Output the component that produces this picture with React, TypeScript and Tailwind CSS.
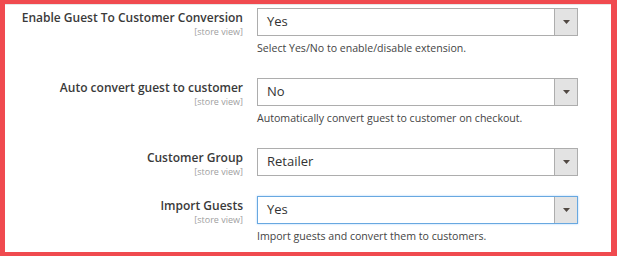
const FONT = "font-['Open_Sans','Noto_Sans',sans-serif]";

interface FieldProps {
  label: string;
  value: string;
  help?: string;
  focused?: boolean;
  className?: string;
}

function Field({ label, value, help, focused, className }: FieldProps) {
  return (
    <div className={`flex gap-[14px] ${className ?? ""}`}>
      <div className="w-[238px] flex-shrink-0 text-right pt-[2px]">
        <div className="text-[12px] leading-[15px] font-semibold text-[#3a3a3a] whitespace-nowrap">{label}</div>
        <div className="mt-[1px] text-[9px] leading-[11px] text-[#a0a0a0]">[store view]</div>
      </div>
      <div className="w-[321px] flex-shrink-0">
        <div
          className={`flex h-[28px] bg-white border ${
            focused ? "border-[#68a8e0] shadow-[0_0_2px_rgba(0,126,255,0.35)]" : "border-[#adadad]"
          }`}
        >
          <div className="flex-1 flex items-center pl-[9px] text-[13px] text-[#333]">{value}</div>
          <div className="w-[23px] flex items-center justify-center bg-[#e3e3e3] border-l border-[#adadad]">
            <svg width="7" height="4" viewBox="0 0 7 4">
              <path d="M0 0h7L3.5 4z" fill="#514943" />
            </svg>
          </div>
        </div>
        {help && <div className="mt-[5px] text-[10.6px] leading-[14px] text-[#444]">{help}</div>}
      </div>
    </div>
  );
}

export default function App() {
  return (
    <div
      className={`w-[617px] h-[256px] bg-white border-solid border-[#f04a4f] border-l-[5px] border-t-[4px] border-r-[6px] border-b-[4px] overflow-hidden ${FONT}`}
    >
      <div className="border-t border-[#e6e6e6]">
        <Field
          className="mt-[3px]"
          label="Enable Guest To Customer Conversion"
          value="Yes"
          help="Select Yes/No to enable/disable extension."
        />
        <Field
          className="mt-[23px]"
          label="Auto convert guest to customer"
          value="No"
          help="Automatically convert guest to customer on checkout."
        />
        <Field className="mt-[23px]" label="Customer Group" value="Retailer" />
        <Field
          className="mt-[19px]"
          label="Import Guests"
          value="Yes"
          focused
          help="Import guests and convert them to customers."
        />
      </div>
    </div>
  );
}
